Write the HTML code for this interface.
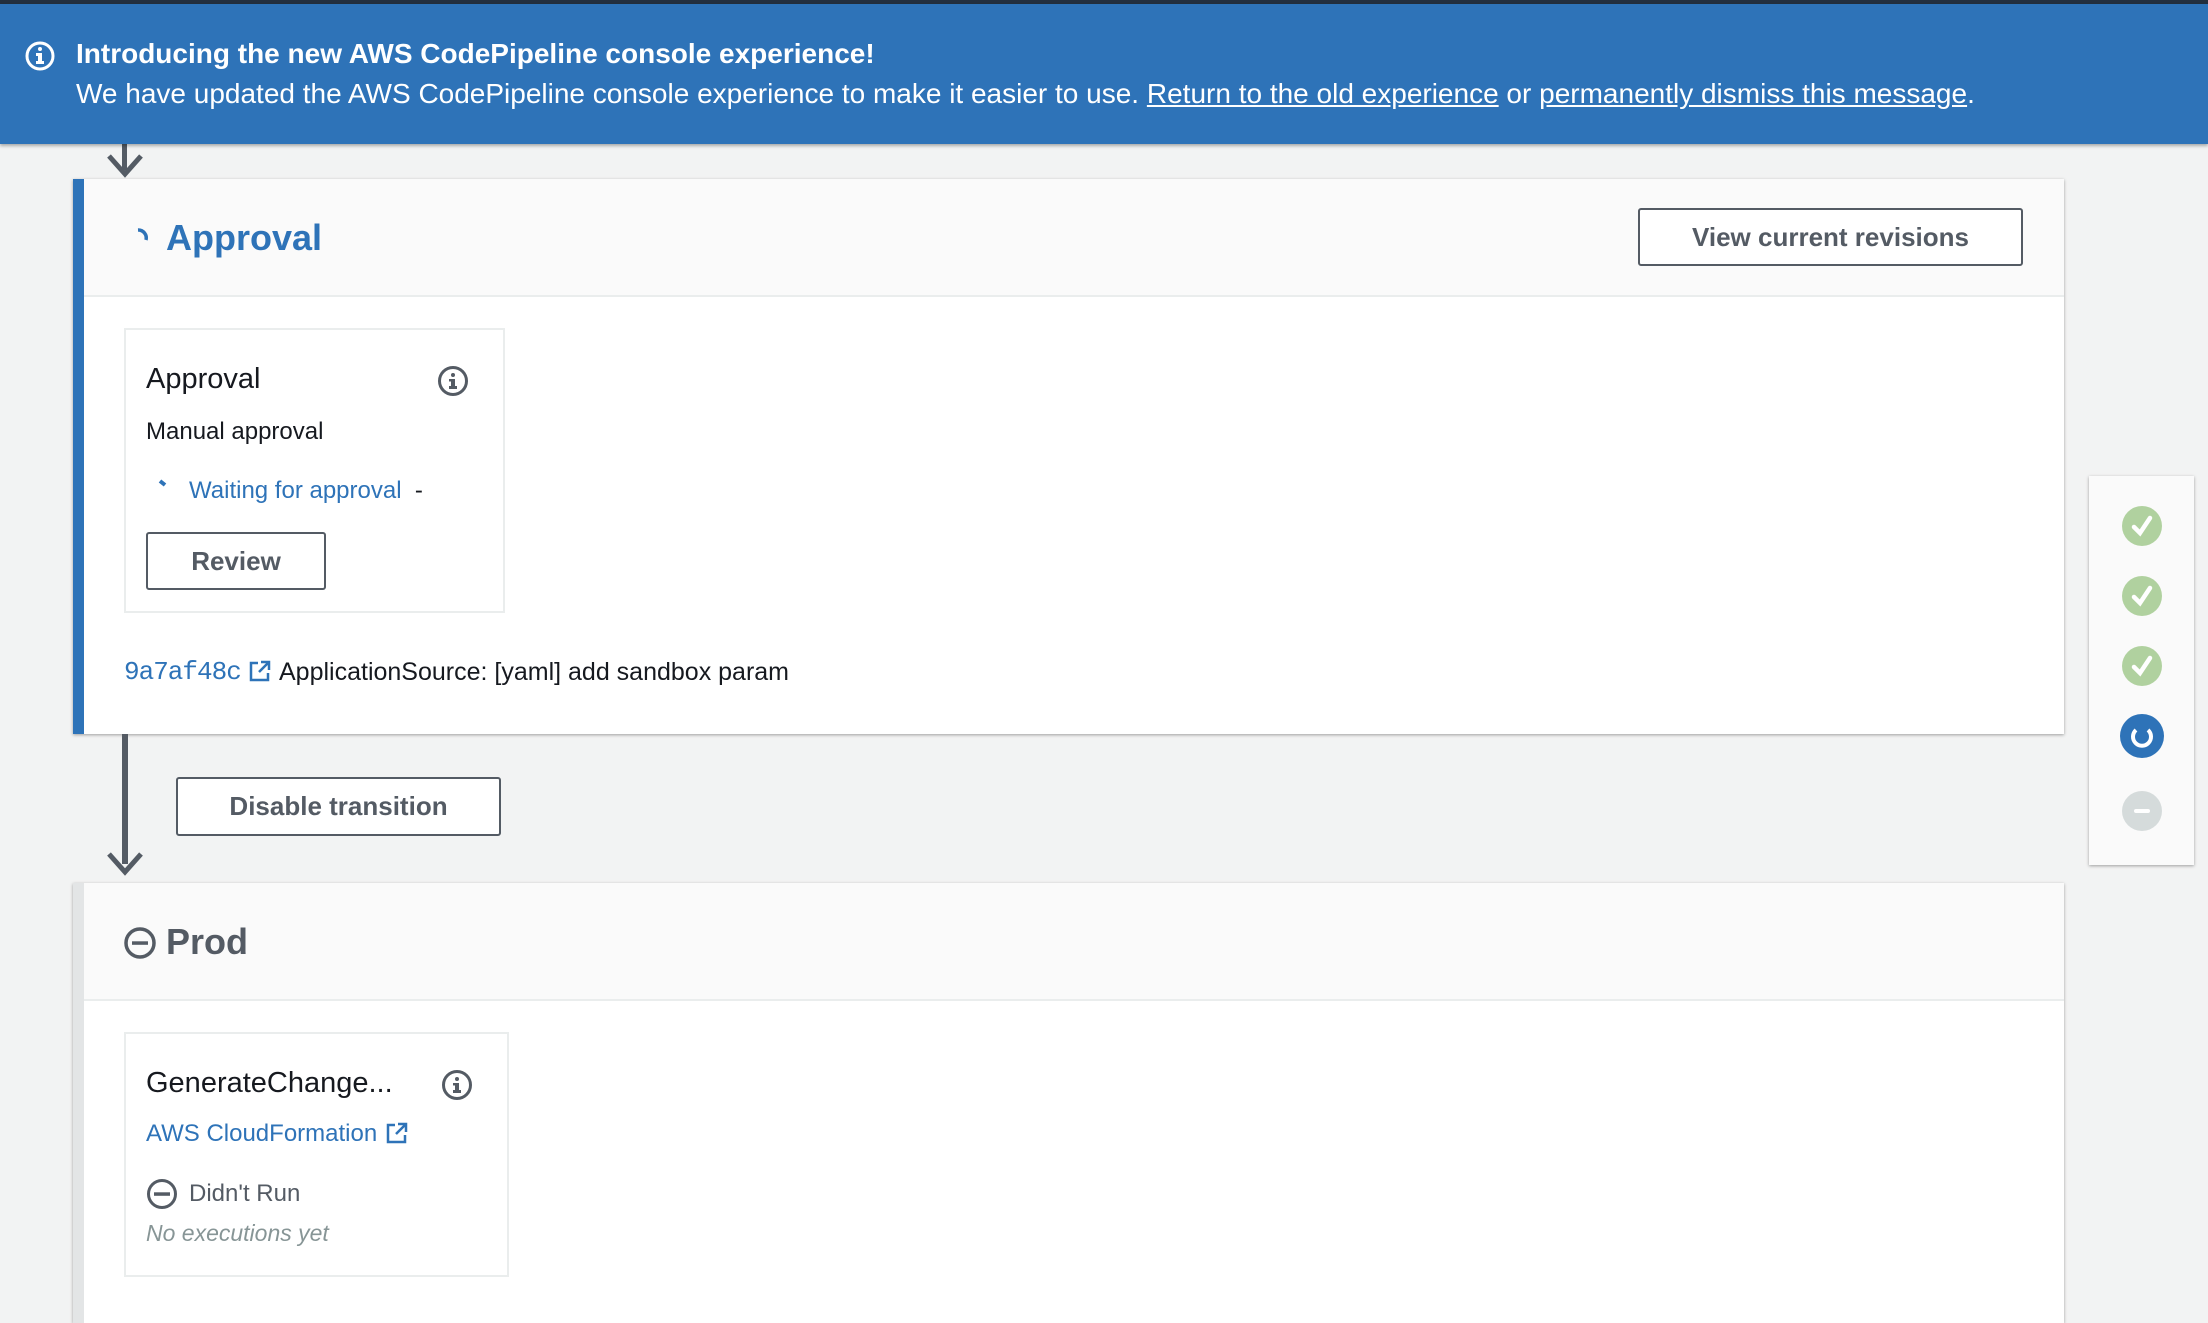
<!DOCTYPE html>
<html><head><meta charset="utf-8"><style>
*{box-sizing:border-box;margin:0;padding:0}
body{width:2208px;height:1306px;overflow:hidden;background:#f2f3f3;font-family:"Liberation Sans",sans-serif;position:relative;color:#16191f}
.a{position:absolute;white-space:nowrap}
.btn{position:absolute;border:2px solid #545b64;border-radius:3px;background:#fff;color:#545b64;font-weight:bold;font-size:26px;display:flex;align-items:center;justify-content:center}
</style></head><body>
<div class="a" style="left:0;top:0;width:2208px;height:4px;background:#232f3e"></div>
<div class="a" style="left:0;top:4px;width:2208px;height:140px;background:#2e73b8;box-shadow:0 2px 3px rgba(0,0,0,.3);z-index:2">
 <svg class="a" style="left:24px;top:36px" width="32" height="32" viewBox="0 0 32 32"><circle cx="16" cy="16" r="13" fill="none" stroke="#fff" stroke-width="3"/><rect x="14" y="13" width="4" height="10" fill="#fff"/><rect x="12" y="21" width="8" height="3" fill="#fff"/><rect x="12" y="13" width="4" height="3" fill="#fff"/><circle cx="16" cy="9" r="2" fill="#fff"/></svg>
 <div class="a" style="left:76px;top:34px;font-size:28px;font-weight:bold;color:#fff">Introducing the new AWS CodePipeline console experience!</div>
 <div class="a" style="left:76px;top:74px;font-size:28px;color:#fff">We have updated the AWS CodePipeline console experience to make it easier to use. <u>Return to the old experience</u> or <u>permanently dismiss this message</u>.</div>
</div>
<div class="a" style="left:122px;top:140px;width:5px;height:30px;background:#545b64"></div>
<svg class="a" style="left:105px;top:150px" width="40" height="28"><polyline points="4,6 20,24 36,6" fill="none" stroke="#545b64" stroke-width="5"/></svg>
<div class="a" style="left:73px;top:179px;width:1991px;height:555px;background:#fff;border-left:11px solid #2e73b8;box-shadow:0 1px 3px rgba(0,0,0,.35)">
 <div class="a" style="left:0;top:0;width:1980px;height:118px;background:#fafafa;border-bottom:2px solid #eaeded"></div>
</div>
<svg class="a" style="left:130px;top:226px" width="24" height="24" viewBox="0 0 24 24"><path d="M8 4 A8 8 0 0 1 16 14" fill="none" stroke="#2e73b8" stroke-width="3.5"/></svg>
<div class="a" style="left:166px;top:217px;font-size:36px;font-weight:bold;color:#2e73b8">Approval</div>
<div class="btn" style="left:1638px;top:208px;width:385px;height:58px">View current revisions</div>
<div class="a" style="left:124px;top:328px;width:381px;height:285px;border:2px solid #eaeded;background:#fff"></div>
<div class="a" style="left:146px;top:363px;font-size:29px">Approval</div>
<svg class="a" style="left:437px;top:365px" width="32" height="32" viewBox="0 0 32 32"><circle cx="16" cy="16" r="13.5" fill="none" stroke="#545b64" stroke-width="3"/><rect x="14" y="14" width="4" height="8" fill="#545b64"/><rect x="12" y="21" width="8" height="3" fill="#545b64"/><rect x="12" y="14" width="4" height="2.5" fill="#545b64"/><circle cx="16" cy="10" r="2" fill="#545b64"/></svg>
<div class="a" style="left:146px;top:418px;font-size:24px">Manual approval</div>
<svg class="a" style="left:155px;top:478px" width="20" height="20"><path d="M5 3 L10 7" stroke="#2e73b8" stroke-width="4"/></svg>
<div class="a" style="left:189px;top:477px;font-size:24px;color:#2e73b8">Waiting for approval <span style="color:#16191f">&nbsp;-</span></div>
<div class="btn" style="left:146px;top:532px;width:180px;height:58px">Review</div>
<div class="a" style="left:124px;top:657px;font-size:26px;font-family:'Liberation Mono',monospace;color:#2e73b8;letter-spacing:-1px">9a7af48c</div>
<svg class="a" style="left:248px;top:659px" width="24" height="24" viewBox="0 0 24 24"><path d="M10 4H3v17h17v-7M13 3h8v8M21 3L11 13" fill="none" stroke="#2e73b8" stroke-width="2.5"/></svg>
<div class="a" style="left:279px;top:658px;font-size:25px">ApplicationSource: [yaml] add sandbox param</div>
<div class="a" style="left:122px;top:734px;width:6px;height:130px;background:#545b64"></div>
<svg class="a" style="left:105px;top:848px" width="40" height="30"><polyline points="4,6 20,24 36,6" fill="none" stroke="#545b64" stroke-width="5"/></svg>
<div class="btn" style="left:176px;top:777px;width:325px;height:59px">Disable transition</div>
<div class="a" style="left:73px;top:883px;width:1991px;height:440px;background:#fff;border-left:11px solid #e3e5e6;box-shadow:0 1px 3px rgba(0,0,0,.35)">
 <div class="a" style="left:0;top:0;width:1980px;height:118px;background:#fafafa;border-bottom:2px solid #eaeded"></div>
</div>
<svg class="a" style="left:123px;top:926px" width="34" height="34" viewBox="0 0 34 34"><circle cx="17" cy="17" r="14" fill="none" stroke="#545b64" stroke-width="3.5"/><rect x="9" y="15.3" width="16" height="3.5" fill="#545b64"/></svg>
<div class="a" style="left:166px;top:921px;font-size:36px;font-weight:bold;color:#545b64">Prod</div>
<div class="a" style="left:124px;top:1032px;width:385px;height:245px;border:2px solid #eaeded;background:#fff"></div>
<div class="a" style="left:146px;top:1067px;font-size:29px">GenerateChange...</div>
<svg class="a" style="left:441px;top:1069px" width="32" height="32" viewBox="0 0 32 32"><circle cx="16" cy="16" r="13.5" fill="none" stroke="#545b64" stroke-width="3"/><rect x="14" y="14" width="4" height="8" fill="#545b64"/><rect x="12" y="21" width="8" height="3" fill="#545b64"/><rect x="12" y="14" width="4" height="2.5" fill="#545b64"/><circle cx="16" cy="10" r="2" fill="#545b64"/></svg>
<div class="a" style="left:146px;top:1120px;font-size:24px;color:#2e73b8">AWS CloudFormation</div>
<svg class="a" style="left:385px;top:1121px" width="24" height="24" viewBox="0 0 24 24"><path d="M10 4H3v17h17v-7M13 3h8v8M21 3L11 13" fill="none" stroke="#2e73b8" stroke-width="2.5"/></svg>
<svg class="a" style="left:146px;top:1178px" width="32" height="32" viewBox="0 0 32 32"><circle cx="16" cy="16" r="13.5" fill="none" stroke="#545b64" stroke-width="3"/><rect x="8" y="14.3" width="16" height="3.5" fill="#545b64"/></svg>
<div class="a" style="left:189px;top:1180px;font-size:24px;color:#545b64">Didn't Run</div>
<div class="a" style="left:146px;top:1220px;font-size:23px;font-style:italic;color:#879596">No executions yet</div>
<div class="a" style="left:2089px;top:476px;width:105px;height:389px;background:#fafafa;box-shadow:0 1px 3px rgba(0,0,0,.35)"></div>
<svg class="a" style="left:2089px;top:476px" width="105" height="389">
 <g fill="#b0d19f"><circle cx="53" cy="50" r="20"/><circle cx="53" cy="120" r="20"/><circle cx="53" cy="190" r="20"/></g>
 <g fill="none" stroke="#fff" stroke-width="4.5" stroke-linecap="round"><polyline points="45,51 51,57 61,42"/><polyline points="45,121 51,127 61,112"/><polyline points="45,191 51,197 61,182"/></g>
 <circle cx="53" cy="260" r="22" fill="#2e73b8"/>
 <path d="M47 254 A9 9 0 1 0 59 254" fill="none" stroke="#fff" stroke-width="4"/>
 <circle cx="53" cy="335" r="20" fill="#d5dbdb"/>
 <rect x="45" y="333" width="16" height="4" rx="2" fill="#fff"/>
</svg>
</body></html>
